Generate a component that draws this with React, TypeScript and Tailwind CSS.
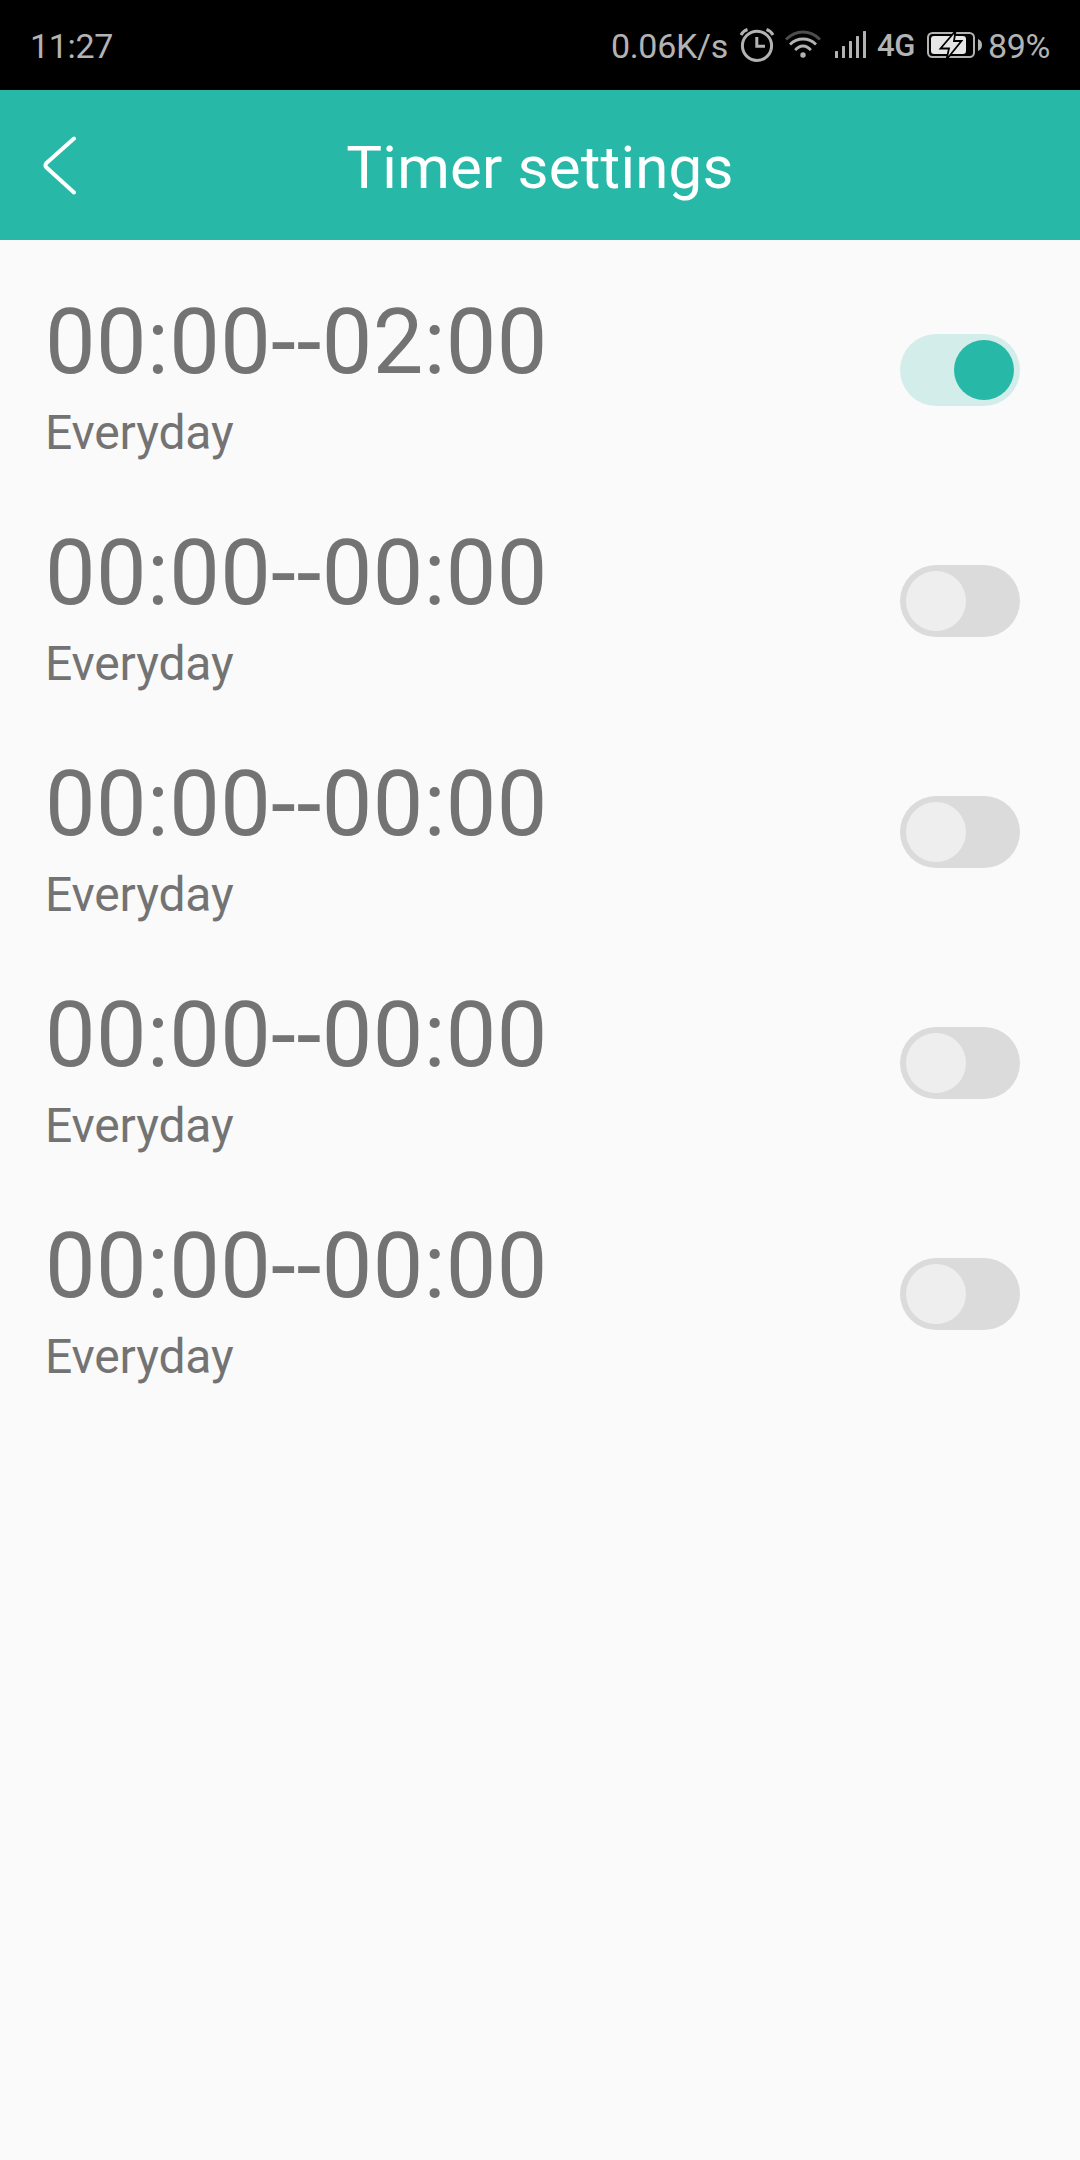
const timers = [
  { range: "00:00--02:00", repeat: "Everyday", on: true },
  { range: "00:00--00:00", repeat: "Everyday", on: false },
  { range: "00:00--00:00", repeat: "Everyday", on: false },
  { range: "00:00--00:00", repeat: "Everyday", on: false },
  { range: "00:00--00:00", repeat: "Everyday", on: false },
];

function AlarmIcon() {
  return (
    <svg className="ml-[11px] h-[34px] w-[36px] shrink-0" viewBox="0 0 36 34" fill="none" stroke="#b3b3b3">
      <circle cx="18" cy="17.800" r="14.600" strokeWidth="3" />
      <path d="M17.800 9v9.200h8.200" strokeWidth="3" />
      <path d="M2 7Q4 3 8.500 1.500M34 7Q32 3 27.500 1.500" strokeWidth="3" />
    </svg>
  );
}

function WifiIcon() {
  return (
    <svg className="ml-[10px] h-[30px] w-[36px] shrink-0" viewBox="0 0 36 30" fill="none" stroke="#b3b3b3" strokeWidth="2.8">
      <path d="M1 9.500Q8.500 2 18 2T35 9.500" stroke="#4d4d4d" />
      <path d="M5 14.500Q10.500 9 18 9T31 14.500" />
      <path d="M10.200 20.200Q13.500 16 18 16T25.800 20.200" />
      <circle cx="18" cy="25" r="2.700" fill="#b3b3b3" stroke="none" />
    </svg>
  );
}

function SignalIcon() {
  return (
    <svg className="ml-[14px] h-[28px] w-[31px] shrink-0" viewBox="0 0 31 28" fill="#b3b3b3">
      <rect x="0" y="20" width="3" height="7" rx=".5" />
      <rect x="7" y="15" width="3" height="12" rx=".5" />
      <rect x="14" y="10" width="3" height="17" rx=".5" />
      <rect x="21" y="5" width="3" height="22" rx=".5" />
      <rect x="28" y="0" width="3" height="27" rx=".5" />
    </svg>
  );
}

function BatteryIcon() {
  return (
    <svg className="h-[28px] w-[56px] shrink-0" viewBox="0 0 56 28">
      <rect x="1" y="2" width="46" height="24" rx="4.500" fill="none" stroke="#b3b3b3" strokeWidth="2" />
      <rect x="4" y="5" width="35" height="18" rx="3" fill="#e6e6e6" />
      <path d="M51 8q4 1.500 4 6t-4 6z" fill="#b3b3b3" />
      <path d="M28.500 0L13.500 17.500h8.500L19.500 28.500L34.500 10h-7.500z" fill="#e6e6e6" stroke="#000" strokeWidth="1.800" />
    </svg>
  );
}

function StatusBar() {
  return (
    <div className="flex h-[90px] items-center justify-between bg-black px-[30px] text-[34px] leading-[40px] tracking-[-0.3px] text-[#b3b3b3]">
      <span className="pt-[2px]">11:27</span>
      <div className="flex items-center">
        <span className="pt-[2px]">0.06K/s</span>
        <AlarmIcon />
        <WifiIcon />
        <SignalIcon />
        <span className="w-[61px] pt-[2px] pl-[11px] text-[31px] font-medium">4G</span>
        <BatteryIcon />
        <span className="w-[67px] pt-[2px] pl-[5px] whitespace-nowrap">89%</span>
      </div>
    </div>
  );
}

function Header() {
  return (
    <header className="grid h-[150px] grid-cols-[1fr_auto_1fr] items-center bg-[#27b8a7] text-white">
      <button aria-label="Back" className="ml-[41px] w-[36px]">
        <svg className="-mt-px h-[60px] w-[36px]" viewBox="0 0 36 60" fill="none" stroke="currentColor" strokeWidth="4" strokeLinecap="round" strokeLinejoin="round">
          <path d="M33 3.500L5.500 28Q3.500 30.500 5.500 32.500L33 57.500" />
        </svg>
      </button>
      <h1 className="pt-[6px] text-[60px] leading-[70px] tracking-[0.2px]">Timer settings</h1>
    </header>
  );
}

function Switch({ on }: { on: boolean }) {
  return (
    <button
      role="switch"
      aria-checked={on}
      className={
        on
          ? "flex h-[72px] w-[120px] justify-end rounded-full bg-[#d3eeea] p-[6px]"
          : "flex h-[72px] w-[120px] justify-start rounded-full bg-[#dbdbdb] p-[6px]"
      }
    >
      <span className={on ? "size-[60px] rounded-full bg-[#27b8a7]" : "size-[60px] rounded-full bg-[#eeeeee]"} />
    </button>
  );
}

export default function App() {
  return (
    <div className="min-h-[2160px] w-[1080px] bg-[#fafafa] font-[Roboto,sans-serif]">
      <StatusBar />
      <Header />
      <main className="pt-[14px]">
        {timers.map((timer, i) => (
          <div key={i} className="flex h-[231px] items-start justify-between pr-[60px] pl-[45px] text-[#737373]">
            <div className="pt-[36px]">
              <div className="text-[90px] leading-[106px] tracking-[0.4px]">{timer.range}</div>
              <div className="mt-[9px] text-[48px] leading-[56px] tracking-[-0.15px]">{timer.repeat}</div>
            </div>
            <div className="pt-[80px]">
              <Switch on={timer.on} />
            </div>
          </div>
        ))}
      </main>
    </div>
  );
}
